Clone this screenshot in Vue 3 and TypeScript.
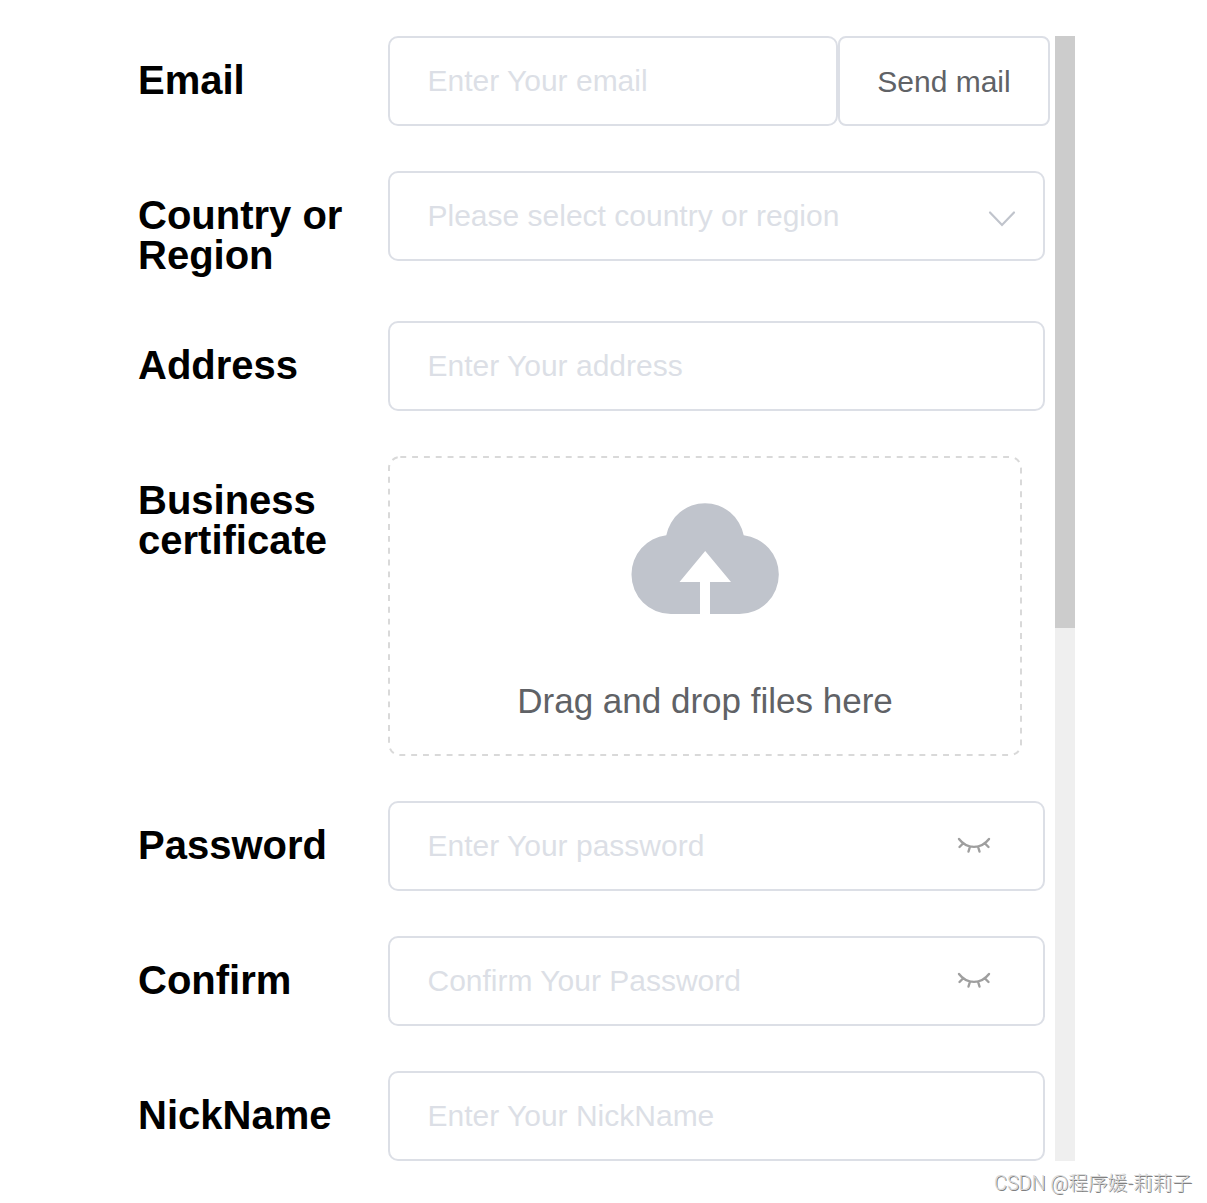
<script setup lang="ts">
interface Field { label: string; kind: 'email' | 'select' | 'input' | 'upload' | 'password'; hint: string; height: number }
const fields: Field[] = [
  { label: 'Email', kind: 'email', hint: 'Enter Your email', height: 90 },
  { label: 'Country or Region', kind: 'select', hint: 'Please select country or region', height: 105 },
  { label: 'Address', kind: 'input', hint: 'Enter Your address', height: 90 },
  { label: 'Business certificate', kind: 'upload', hint: 'Drag and drop files here', height: 300 },
  { label: 'Password', kind: 'password', hint: 'Enter Your password', height: 90 },
  { label: 'Confirm', kind: 'password', hint: 'Confirm Your Password', height: 90 },
  { label: 'NickName', kind: 'input', hint: 'Enter Your NickName', height: 90 },
]
</script>

<template>
  <main class="page">
    <div class="panel">
      <form class="form">
        <div v-for="f in fields" :key="f.label" class="row" :style="{ height: f.height + 'px' }">
          <label class="label">{{ f.label }}</label>
          <div v-if="f.kind === 'upload'" class="upload">
            <svg class="outline" width="634" height="300" viewBox="0 0 634 300">
              <path d="M12.300 1H622A11 11 0 0 1 633 12V288A11 11 0 0 1 622 299H12A11 11 0 0 1 1 288V12A11 11 0 0 1 12 1" fill="none" stroke="#d9d9d9" stroke-width="2" stroke-dasharray="5.910 5.910" />
            </svg>
            <svg class="cloud" width="148" height="112" viewBox="0 0 148 112">
              <path fill="#c0c4cc" d="M39.800 111A39.300 39.300 0 0 1 .5 71.700A39.300 39.300 0 0 1 35.300 32.300A39.400 39.400 0 0 1 112.700 32.300A39.300 39.300 0 0 1 147.800 71.700A39.300 39.300 0 0 1 108.500 111H79V79H100L74.200 48L48.500 79H69V111Z" />
            </svg>
            <span class="drop">{{ f.hint }}</span>
          </div>
          <template v-else>
            <div class="box" :class="f.kind">
              <span class="hint">{{ f.hint }}</span>
              <svg v-if="f.kind === 'select'" class="chevron" width="28" height="18" viewBox="0 0 28 18">
                <path d="M2 2.500L14 15L26 2.500" fill="none" stroke="#c0c4cc" stroke-width="2.200" stroke-linecap="round" />
              </svg>
              <svg v-if="f.kind === 'password'" class="eye" width="34" height="18" viewBox="0 0 34 18">
                <path d="M2 3C10 13.500 24 13.500 32 3M6 7.500L2.500 11M13 10.500L11.500 15.500M21 10.500L22.500 15.500M28 7.500L31.500 11" fill="none" stroke="#9f9f9f" stroke-width="2.400" stroke-linecap="round" />
              </svg>
            </div>
            <button v-if="f.kind === 'email'" type="button" class="send">Send mail</button>
          </template>
        </div>
      </form>
      <div class="track"><div class="thumb"></div></div>
    </div>
    <footer class="mark">CSDN @程序媛-莉莉子</footer>
  </main>
</template>

<style>
body { margin: 0; background: #fff; }
</style>
<style scoped>
.page { box-sizing: border-box; width: 1207px; height: 1203px; padding: 36px 0 0 138px; overflow: hidden; background: #fff; font-family: "Liberation Sans", Arial, sans-serif; }
.panel { display: flex; width: 937px; height: 1125px; }
.form { display: flex; flex-direction: column; gap: 45px; width: 917px; }
.row { display: flex; flex: none; align-items: flex-start; }
.label { flex: none; box-sizing: border-box; width: 250px; padding: 24px 30px 0 0; font-size: 40px; line-height: 40px; font-weight: 700; color: #000; }
.box { display: flex; flex: none; align-items: center; justify-content: space-between; box-sizing: border-box; width: 657px; height: 90px; padding: 0 27px 0 37.500px; border: 2px solid #dcdfe6; border-radius: 10px; }
.box.email { width: 450px; }
.box.password { padding-right: 52px; }
.hint { font-size: 30px; line-height: 34px; color: #dcdfe6; white-space: nowrap; }
.chevron { margin-top: 6px; }
.eye { margin-top: -2px; }
.send { flex: none; box-sizing: border-box; width: 212px; height: 90px; padding: 2px 0 0; border: 2px solid #dcdfe6; border-radius: 8px; background: #fff; color: #606266; font: 30px "Liberation Sans", Arial, sans-serif; }
.upload { position: relative; display: flex; flex-direction: column; align-items: center; box-sizing: border-box; width: 634px; height: 300px; padding-top: 47px; }
.outline { position: absolute; inset: 0; }
.drop { margin-top: 66px; font-size: 35px; line-height: 40px; color: #606266; white-space: nowrap; }
.track { width: 20px; height: 1125px; background: #efefef; }
.thumb { height: 592px; background: #cccccc; }
.mark { margin: 9px 15px 0 0; text-align: right; font: 300 19.700px/28px Roboto, "Noto Sans CJK SC", sans-serif; color: #d8d8d8; text-shadow: 1px 1px 0 #808080; }
</style>
